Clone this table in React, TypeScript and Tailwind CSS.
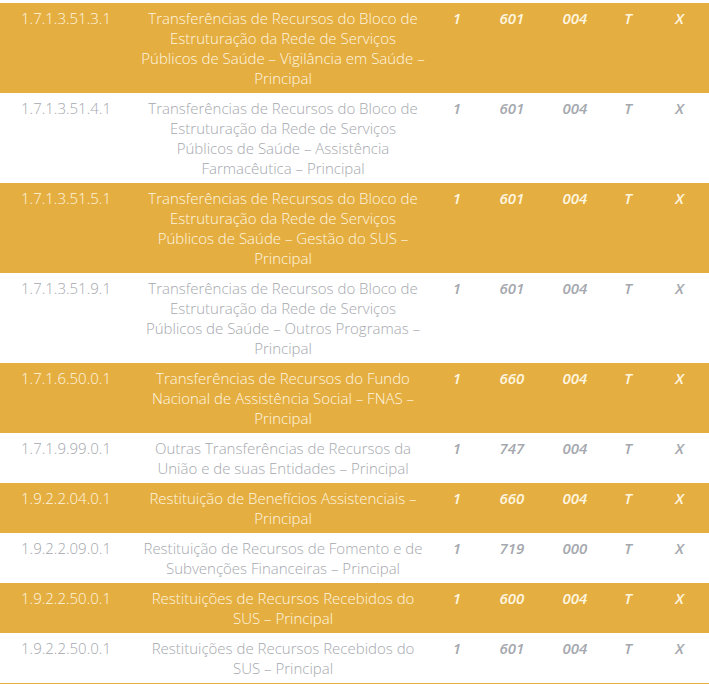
const rows = [
  { code: '1.7.1.3.51.3.1', desc: 'Transferências de Recursos do Bloco de Estruturação da Rede de Serviços Públicos de Saúde – Vigilância em Saúde – Principal', a: '1', b: '601', c: '004' },
  { code: '1.7.1.3.51.4.1', desc: 'Transferências de Recursos do Bloco de Estruturação da Rede de Serviços Públicos de Saúde – Assistência Farmacêutica – Principal', a: '1', b: '601', c: '004' },
  { code: '1.7.1.3.51.5.1', desc: 'Transferências de Recursos do Bloco de Estruturação da Rede de Serviços Públicos de Saúde – Gestão do SUS – Principal', a: '1', b: '601', c: '004' },
  { code: '1.7.1.3.51.9.1', desc: 'Transferências de Recursos do Bloco de Estruturação da Rede de Serviços Públicos de Saúde – Outros Programas – Principal', a: '1', b: '601', c: '004' },
  { code: '1.7.1.6.50.0.1', desc: 'Transferências de Recursos do Fundo Nacional de Assistência Social – FNAS – Principal', a: '1', b: '660', c: '004' },
  { code: '1.7.1.9.99.0.1', desc: 'Outras Transferências de Recursos da União e de suas Entidades – Principal', a: '1', b: '747', c: '004' },
  { code: '1.9.2.2.04.0.1', desc: 'Restituição de Benefícios Assistenciais – Principal', a: '1', b: '660', c: '004' },
  { code: '1.9.2.2.09.0.1', desc: 'Restituição de Recursos de Fomento e de Subvenções Financeiras – Principal', a: '1', b: '719', c: '000' },
  { code: '1.9.2.2.50.0.1', desc: 'Restituições de Recursos Recebidos do SUS – Principal', a: '1', b: '600', c: '004' },
  { code: '1.9.2.2.50.0.1', desc: 'Restituições de Recursos Recebidos do SUS – Principal', a: '1', b: '601', c: '004' },
];

export default function App() {
  return (
    <div className="w-[709px] bg-white pt-[3px] font-['Open_Sans',sans-serif] text-[15px] leading-5">
      <div className="border-b border-solid border-b-[#e4ae41]">
        {rows.map((r, i) => {
          const gold = i % 2 === 0;
          return (
            <div
              key={i}
              className={
                gold
                  ? 'grid grid-cols-[132px_302px_46px_64px_62px_44px_59px] bg-[#e4ae41] text-[#fff6e0]'
                  : 'grid grid-cols-[132px_302px_46px_64px_62px_44px_59px] bg-white text-[#a5a8ae]'
              }
            >
              <div className="px-2 py-[5px] text-center font-light">{r.code}</div>
              <div className="px-2 py-[5px] text-center font-light">{r.desc}</div>
              <div className="py-[5px] text-center font-semibold italic">{r.a}</div>
              <div className="py-[5px] text-center font-semibold italic">{r.b}</div>
              <div className="py-[5px] text-center font-semibold italic">{r.c}</div>
              <div className="py-[5px] text-center font-semibold italic">T</div>
              <div className="py-[5px] text-center font-semibold italic">X</div>
            </div>
          );
        })}
      </div>
    </div>
  );
}
